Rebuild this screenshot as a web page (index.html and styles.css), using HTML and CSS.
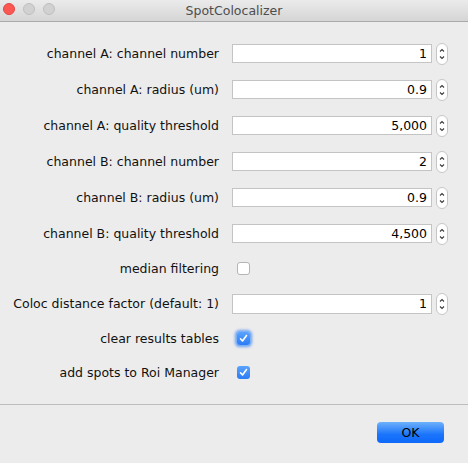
FILE: index.html
```html
<!DOCTYPE html>
<html>
<head>
<meta charset="utf-8">
<link rel="stylesheet" href="styles.css">
</head>
<body>
<div class="window">
  <div class="titlebar">
    <div class="lights">
      <span class="light red"></span>
      <span class="light gray"></span>
      <span class="light gray"></span>
    </div>
    <div class="title">SpotColocalizer</div>
  </div>
  <div class="form">
    <div class="row field-row">
      <label class="lbl">channel A: channel number</label>
      <div class="ctrl"><div class="field">1</div><div class="spin"><svg width="12" height="22" viewBox="0 0 12 22"><path d="M4 8.5 L6 6.5 L8 8.5 M4 13.5 L6 15.5 L8 13.5" fill="none" stroke="#3a3a3a" stroke-width="1.1"/></svg></div></div>
    </div>
    <div class="row field-row">
      <label class="lbl">channel A: radius (um)</label>
      <div class="ctrl"><div class="field">0.9</div><div class="spin"><svg width="12" height="22" viewBox="0 0 12 22"><path d="M4 8.5 L6 6.5 L8 8.5 M4 13.5 L6 15.5 L8 13.5" fill="none" stroke="#3a3a3a" stroke-width="1.1"/></svg></div></div>
    </div>
    <div class="row field-row">
      <label class="lbl">channel A: quality threshold</label>
      <div class="ctrl"><div class="field">5,000</div><div class="spin"><svg width="12" height="22" viewBox="0 0 12 22"><path d="M4 8.5 L6 6.5 L8 8.5 M4 13.5 L6 15.5 L8 13.5" fill="none" stroke="#3a3a3a" stroke-width="1.1"/></svg></div></div>
    </div>
    <div class="row field-row">
      <label class="lbl">channel B: channel number</label>
      <div class="ctrl"><div class="field">2</div><div class="spin"><svg width="12" height="22" viewBox="0 0 12 22"><path d="M4 8.5 L6 6.5 L8 8.5 M4 13.5 L6 15.5 L8 13.5" fill="none" stroke="#3a3a3a" stroke-width="1.1"/></svg></div></div>
    </div>
    <div class="row field-row">
      <label class="lbl">channel B: radius (um)</label>
      <div class="ctrl"><div class="field">0.9</div><div class="spin"><svg width="12" height="22" viewBox="0 0 12 22"><path d="M4 8.5 L6 6.5 L8 8.5 M4 13.5 L6 15.5 L8 13.5" fill="none" stroke="#3a3a3a" stroke-width="1.1"/></svg></div></div>
    </div>
    <div class="row field-row">
      <label class="lbl">channel B: quality threshold</label>
      <div class="ctrl"><div class="field">4,500</div><div class="spin"><svg width="12" height="22" viewBox="0 0 12 22"><path d="M4 8.5 L6 6.5 L8 8.5 M4 13.5 L6 15.5 L8 13.5" fill="none" stroke="#3a3a3a" stroke-width="1.1"/></svg></div></div>
    </div>
    <div class="row check-row">
      <label class="lbl">median filtering</label>
      <div class="ctrl"><span class="box"></span></div>
    </div>
    <div class="row field-row">
      <label class="lbl">Coloc distance factor (default: 1)</label>
      <div class="ctrl"><div class="field tall">1</div><div class="spin"><svg width="12" height="22" viewBox="0 0 12 22"><path d="M4 8.5 L6 6.5 L8 8.5 M4 13.5 L6 15.5 L8 13.5" fill="none" stroke="#3a3a3a" stroke-width="1.1"/></svg></div></div>
    </div>
    <div class="row check-row">
      <label class="lbl">clear results tables</label>
      <div class="ctrl"><span class="box checked focus"><svg width="13" height="13" viewBox="0 0 13 13"><path d="M3.5 6.8 L5.5 9 L9.5 3.5" fill="none" stroke="#fff" stroke-width="1.6" stroke-linecap="round" stroke-linejoin="round"/></svg></span></div>
    </div>
    <div class="row check-row">
      <label class="lbl">add spots to Roi Manager</label>
      <div class="ctrl"><span class="box checked"><svg width="13" height="13" viewBox="0 0 13 13"><path d="M3.5 6.8 L5.5 9 L9.5 3.5" fill="none" stroke="#fff" stroke-width="1.6" stroke-linecap="round" stroke-linejoin="round"/></svg></span></div>
    </div>
  </div>
  <div class="footer">
    <button class="ok">OK</button>
  </div>
</div>
</body>
</html>
```

FILE: styles.css
```css
* { box-sizing: border-box; }
html, body {
  margin: 0;
  padding: 0;
  background: #ececec;
}
body {
  font-family: "DejaVu Sans", "Liberation Sans", sans-serif;
  font-size: 12.5px;
  color: #111;
}
.window {
  width: 468px;
  height: 463px;
  display: flex;
  flex-direction: column;
  background: #ececec;
}
.titlebar {
  height: 22px;
  flex: none;
  background: linear-gradient(#ebebeb, #d5d5d5);
  border-bottom: 1px solid #a9a9a9;
  display: flex;
  align-items: center;
  position: relative;
}
.lights {
  display: flex;
  gap: 8px;
  padding-left: 3px;
  align-self: flex-start;
  padding-top: 3px;
}
.light {
  width: 12px;
  height: 12px;
  border-radius: 50%;
  display: block;
}
.light.red {
  background: #fc5753;
  border: 1px solid #df4744;
}
.light.gray {
  background: #d1d1d1;
  border: 1px solid #bfbfbf;
}
.title {
  position: absolute;
  left: 0;
  right: 0;
  top: 3px;
  text-align: center;
  color: #4d4d4d;
  font-size: 12.5px;
}
.form {
  padding-top: 13.5px;
  display: flex;
  flex-direction: column;
}
.row {
  display: grid;
  grid-template-columns: 219px 1fr;
  column-gap: 13px;
  align-items: center;
}
.field-row { height: 36px; }
.check-row { height: 34px; }
.lbl {
  text-align: right;
  white-space: nowrap;
}
.ctrl {
  display: flex;
  align-items: center;
}
.field {
  width: 200px;
  height: 19px;
  background: #fff;
  border: 1px solid #c4c4c4;
  text-align: right;
  padding-right: 4px;
  line-height: 17px;
  color: #000;
}
.field.tall { height: 20px; line-height: 18px; }
.spin {
  width: 12px;
  height: 22px;
  margin-left: 4px;
  border: 1px solid #c6c6c6;
  border-radius: 6px;
  background: #fff;
  display: flex;
  align-items: center;
  justify-content: center;
  overflow: hidden;
}
.spin svg { display: block; flex: none; margin: -1px; }
.box {
  width: 13px;
  height: 13px;
  margin-left: 5px;
  border: 1px solid #b4b4b4;
  border-radius: 3px;
  background: #fff;
  display: block;
}
.box.checked {
  border: none;
  background: linear-gradient(#5aa2fb, #2b7cf6);
}
.box.checked svg { display: block; }
.box.focus {
  box-shadow: 0 0 0 1.5px #7eb0f5, 0 0 2px 3px rgba(100, 150, 240, 0.45);
}
.footer {
  margin-top: auto;
  height: 59px;
  border-top: 1px solid #bdbdbd;
  display: flex;
  justify-content: flex-end;
  align-items: flex-start;
  padding-top: 17px;
  padding-right: 24px;
}
.ok {
  width: 67px;
  height: 21px;
  border: none;
  border-radius: 4px;
  background: linear-gradient(#6db1fb, #1a74fb 60%, #0e68fa);
  color: #000;
  font-family: "DejaVu Sans", "Liberation Sans", sans-serif;
  font-size: 12.5px;
  padding: 0;
}
```
